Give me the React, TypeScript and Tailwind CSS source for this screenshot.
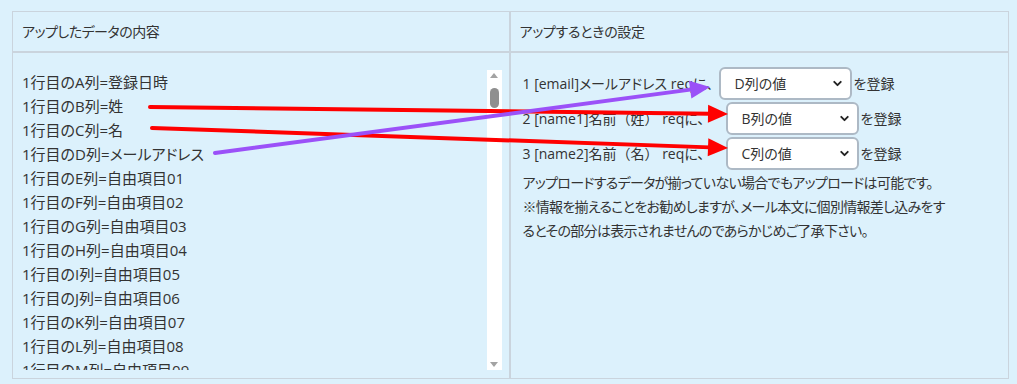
import React from 'react';
import { ChevronDown } from 'lucide-react';

const rows = [
  '1行目のA列=登録日時',
  '1行目のB列=姓',
  '1行目のC列=名',
  '1行目のD列=メールアドレス',
  '1行目のE列=自由項目01',
  '1行目のF列=自由項目02',
  '1行目のG列=自由項目03',
  '1行目のH列=自由項目04',
  '1行目のI列=自由項目05',
  '1行目のJ列=自由項目06',
  '1行目のK列=自由項目07',
  '1行目のL列=自由項目08',
  '1行目のM列=自由項目09',
  '1行目のN列=自由項目10',
];

const settings = [
  { head: '1 [email]メールアドレス', paren: '', value: 'D列の値', w: 'w-[194px]' },
  { head: '2 [name1]名前', paren: '（姓）', value: 'B列の値', w: 'w-[201px]' },
  { head: '3 [name2]名前', paren: '（名）', value: 'C列の値', w: 'w-[201px]' },
];

function FakeSelect({ value }: { value: string }) {
  return (
    <div className="mx-[2px] flex h-[33px] w-[133px] items-center justify-between rounded-[6px] border-2 border-[#adb9c5] bg-white pl-[14px] pr-[6px]">
      <span>{value}</span>
      <ChevronDown size={13} strokeWidth={3.5} className="text-[#222]" />
    </div>
  );
}

function Arrow({ x1, y1, x2, y2, color }: { x1: number; y1: number; x2: number; y2: number; color: string }) {
  const dx = x2 - x1;
  const dy = y2 - y1;
  const len = Math.hypot(dx, dy);
  const ux = dx / len;
  const uy = dy / len;
  const bx = x2 - ux * 20;
  const by = y2 - uy * 20;
  const px = -uy * 9;
  const py = ux * 9;
  return (
    <g>
      <line x1={x1} y1={y1} x2={bx + ux * 2} y2={by + uy * 2} stroke={color} strokeWidth={4} strokeLinecap="round" />
      <polygon points={`${x2},${y2} ${bx + px},${by + py} ${bx - px},${by - py}`} fill={color} />
    </g>
  );
}

export default function App() {
  return (
    <div
      className="relative h-[384px] w-[1017px] overflow-hidden bg-[#dcf1fc] pl-[12px] pt-[11px] text-[14px] text-[#333] [font-feature-settings:'palt']"
      style={{ fontFamily: '"Open Sans", "Noto Sans CJK JP", sans-serif' }}
    >
      <div className="grid w-[997px] grid-cols-2 border border-[#cad4dd]">
        <div className="flex h-[41px] items-center border-b-2 border-r-2 border-[#cad4dd] pl-[9px] tracking-[-0.5px]">
          アップしたデータの内容
        </div>
        <div className="flex h-[41px] items-center border-b-2 border-[#cad4dd] pl-[9px] tracking-[-0.3px]">
          アップするときの設定
        </div>

        <div className="h-[325px] border-r-2 border-[#cad4dd] pb-[8px] pl-[8px] pr-[7px] pt-[17px]">
          <div className="flex h-[300px]">
            <div className="flex-1 overflow-hidden pl-[1px] text-[15px] leading-[24px]">
              {rows.map((r) => (
                <div key={r}>{r}</div>
              ))}
            </div>
            <div className="relative w-[15px] bg-white">
              <div className="absolute left-[3px] top-[3px] h-0 w-0 border-x-[4.5px] border-b-[5px] border-x-transparent border-b-[#a3a3a3]" />
              <div className="absolute left-[3px] top-[18px] h-[20px] w-[9px] rounded-full bg-[#8f8f8f]" />
              <div className="absolute bottom-[3px] left-[3px] h-0 w-0 border-x-[4.5px] border-t-[5px] border-x-transparent border-t-[#a3a3a3]" />
            </div>
          </div>
        </div>

        <div className="h-[325px] pl-[12px] pt-[13px]">
          {settings.map((s) => (
            <div key={s.head} className="flex h-[35px] items-center whitespace-nowrap">
              <span className={s.w}>
                {s.head}
                {s.paren && <span className="[font-feature-settings:normal]">{s.paren}</span>}
                {' reqに、'}
              </span>
              <FakeSelect value={s.value} />
              <span>を登録</span>
            </div>
          ))}
          <p className="leading-[24px] tracking-[-0.7px]">
            アップロードするデータが揃っていない場合でもアップロードは可能です。
            <br />
            ※情報を揃えることをお勧めしますが、メール本文に個別情報差し込みをす
            <br />
            るとその部分は表示されませんのであらかじめご了承下さい。
          </p>
        </div>
      </div>

      <svg className="pointer-events-none absolute left-0 top-0" width={1017} height={384}>
        <Arrow x1={150} y1={107} x2={728} y2={114} color="#ff0000" />
        <Arrow x1={152} y1={128} x2={728} y2={148} color="#ff0000" />
        <Arrow x1={215} y1={153} x2={710} y2={87} color="#9b51f8" />
      </svg>
    </div>
  );
}
